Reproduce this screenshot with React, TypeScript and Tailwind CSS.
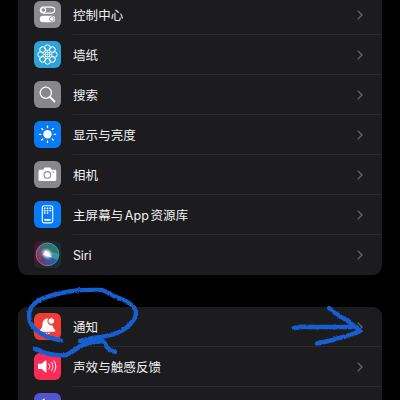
import type { ReactNode } from 'react'

type Item = { label: ReactNode; bg: string; icon: ReactNode }

const ControlIcon = () => (
  <svg viewBox="0 0 27 27" className="size-full" fill="none" stroke="white" strokeWidth="1.1">
    <rect x="6.3" y="6.1" width="14.4" height="6" rx="3" />
    <circle cx="9.3" cy="9.1" r="2.3" />
    <rect x="5.8" y="14.7" width="15.4" height="6.6" rx="3.3" fill="white" stroke="none" />
    <circle cx="17.9" cy="18" r="2.3" fill="white" stroke="#8b8b90" strokeWidth="0.9" />
  </svg>
)

const petals = [0, 45, 90, 135, 180, 225, 270, 315]

const WallpaperIcon = () => (
  <svg viewBox="0 0 27 27" className="size-full" fill="none" stroke="white" strokeWidth="0.95">
    {petals.map(a => (
      <g key={a} transform={`rotate(${a} 13.5 13.5)`}>
        <circle cx="13.5" cy="6.6" r="2.8" />
        <path d="M13.5 11.3V9.8" strokeWidth="0.8" />
      </g>
    ))}
    <circle cx="13.5" cy="13.5" r="2.5" />
    <circle cx="13.5" cy="13.5" r="1.1" fill="white" stroke="none" />
  </svg>
)

const SearchIcon = () => (
  <svg viewBox="0 0 27 27" className="size-full" fill="none" stroke="white" strokeLinecap="round">
    <circle cx="11.8" cy="11.8" r="5.6" strokeWidth="1.3" />
    <path d="M15.9 15.9l4.6 4.6" strokeWidth="1.8" />
  </svg>
)

const SunIcon = () => (
  <svg viewBox="0 0 27 27" className="size-full" stroke="white" strokeWidth="1.3" strokeLinecap="round">
    <circle cx="13.5" cy="13.3" r="4.2" fill="white" stroke="none" />
    {petals.map(a => (
      <path key={a} d="M13.5 6.6V5.2" transform={`rotate(${a} 13.5 13.3)`} />
    ))}
  </svg>
)

const CameraIcon = () => (
  <svg viewBox="0 0 27 27" className="size-full" fill="none">
    <path
      d="M6.2 8.7h3l1-1.7c.2-.4.5-.5.9-.5h4.6c.4 0 .7.1.9.5l1 1.7h3c1 0 1.7.7 1.7 1.7v8c0 1-.7 1.7-1.7 1.7H6.2c-1 0-1.7-.7-1.7-1.7v-8c0-1 .7-1.7 1.7-1.7z"
      fill="white"
    />
    <circle cx="13.4" cy="13.9" r="3.3" stroke="#88888c" strokeWidth="1.1" />
    <circle cx="19.2" cy="11.1" r="0.8" fill="#88888c" />
  </svg>
)

const PhoneIcon = () => (
  <svg viewBox="0 0 27 27" className="size-full" fill="none">
    <rect x="8.3" y="4.7" width="10.4" height="17.2" rx="1.9" stroke="white" strokeWidth="1.1" />
    {[7.2, 9.6, 12].map(y =>
      [10.7, 13.5, 16.3].map(x => (
        <rect key={`${x}-${y}`} x={x - 0.8} y={y - 0.75} width="1.6" height="1.6" rx="0.3" fill={y === 12 && x > 14 ? 'none' : 'white'} />
      )),
    )}
    <rect x="10.2" y="18" width="6.6" height="1.8" rx="0.7" fill="white" />
  </svg>
)

const SiriIcon = () => (
  <svg viewBox="0 0 27 27" className="size-full" fill="none">
    <defs>
      <linearGradient id="siriBg" x1="0" y1="0.2" x2="1" y2="0.6">
        <stop stopColor="#520f30" />
        <stop offset="0.4" stopColor="#2a2434" />
        <stop offset="1" stopColor="#0c3340" />
      </linearGradient>
      <linearGradient id="siriOrb" x1="0.1" y1="0.8" x2="0.8" y2="0.1">
        <stop stopColor="#96285f" />
        <stop offset="0.35" stopColor="#6d5070" />
        <stop offset="0.65" stopColor="#35736c" />
        <stop offset="1" stopColor="#237f70" />
      </linearGradient>
      <radialGradient id="siriGlow">
        <stop stopColor="#fff" />
        <stop offset="0.35" stopColor="#f1ecf3" />
        <stop offset="1" stopColor="#bcaed6" stopOpacity="0" />
      </radialGradient>
      <radialGradient id="siriBlue">
        <stop stopColor="#2f62b4" />
        <stop offset="0.4" stopColor="#2d5eac" />
        <stop offset="1" stopColor="#253b80" stopOpacity="0" />
      </radialGradient>
    </defs>
    <rect width="27" height="27" fill="url(#siriBg)" />
    <circle cx="13.5" cy="13.3" r="11.4" fill="url(#siriOrb)" />
    <ellipse cx="15.5" cy="18.5" rx="9" ry="5.8" fill="url(#siriBlue)" />
    <path d="M14 14c4-3.4 7.5-3.2 10.3-1 .1 2-.5 4-1.5 5.6-3.4-.4-6-2-8.8-4.6z" fill="#38b0cc" opacity="0.6" />
    <ellipse cx="13" cy="12.8" rx="6.8" ry="5.8" transform="rotate(35 13 12.8)" fill="url(#siriGlow)" />
    <path d="M11 9.5c2.5 1.2 5 3.8 7 7-3.2-1-6.8-1.7-9-2.8 1.2-1 1.8-2.4 2-4.2z" fill="#fff" opacity="0.8" />
    <circle cx="13.5" cy="13.3" r="11.4" stroke="#8ba6b3" strokeOpacity="0.75" strokeWidth="0.8" />
  </svg>
)

const BellIcon = () => (
  <svg viewBox="0 0 27 27" className="size-full" fill="white">
    <path d="M13.3 5.2c-3.2.4-4.7 2.8-4.8 5.6-.1 3.4-.8 4.5-2.4 6-.8.8-.5 2 .7 2h13.4c1.2 0 1.5-1.2.7-2-1.2-1.1-1.9-2.3-2.2-4.3-3.5.5-6.2-2.9-4.9-6.2z" />
    <circle cx="17.3" cy="8" r="2.8" />
    <path d="M11.2 19.7h4.6c-.3 1.2-1.1 1.9-2.3 1.9s-2-.7-2.3-1.9z" />
  </svg>
)

const SpeakerIcon = () => (
  <svg viewBox="0 0 27 27" className="size-full" fill="none" stroke="white" strokeWidth="1" strokeLinecap="round">
    <path d="M5 10.8h2.6L11.5 7.6c.4-.4 1-.2 1 .4v10.8c0 .6-.6.8-1 .4l-3.9-3.1H5c-.6 0-1-.4-1-1v-3.3c0-.6.4-1 1-1z" fill="white" stroke="none" />
    <path d="M15 10.9c1.1 1.6 1.1 3.6 0 5.1" />
    <path d="M17.4 9.3c2 2.6 2 5.7 0 8.3" />
    <path d="M19.8 7.8c2.7 3.6 2.7 7.8 0 11.3" />
  </svg>
)

const MoonIcon = () => (
  <svg viewBox="0 0 27 27" className="size-full" fill="white">
    <path d="M11 5.3c-2.2 5.9 2.5 11.6 9.7 10.6-1.5 3.2-4.2 5-7.4 5-8.8 0-11-12-2.3-15.6z" />
  </svg>
)

const general: Item[] = [
  { label: '控制中心', bg: 'bg-[#8b8b90]', icon: <ControlIcon /> },
  { label: '墙纸', bg: 'bg-[#2fa2d6]', icon: <WallpaperIcon /> },
  { label: '搜索', bg: 'bg-[#88888c]', icon: <SearchIcon /> },
  { label: '显示与亮度', bg: 'bg-[#087bf5]', icon: <SunIcon /> },
  { label: '相机', bg: 'bg-[#88888c]', icon: <CameraIcon /> },
  {
    label: <>主屏幕与<span className="mx-[1.5px]">App</span>资源库</>,
    bg: 'bg-[#087bf5]',
    icon: <PhoneIcon />,
  },
  { label: <span className="tracking-[-0.15px]">Siri</span>, bg: 'bg-[#252630]', icon: <SiriIcon /> },
]

const alerts: Item[] = [
  { label: '通知', bg: 'bg-[#ef3d36]', icon: <BellIcon /> },
  { label: '声效与触感反馈', bg: 'bg-[#fb2d58]', icon: <SpeakerIcon /> },
  { label: null, bg: 'bg-[#5654cc]', icon: <MoonIcon /> },
]

function Row({ item, last }: { item: Item; last: boolean }) {
  return (
    <div className="flex h-10 shrink-0 items-stretch pl-4">
      <div className="mt-1.5 size-[27px] shrink-0 overflow-hidden rounded-[6px]">
        <div className={`size-full ${item.bg}`}>{item.icon}</div>
      </div>
      <div className={`ml-3 flex flex-1 items-center justify-between border-b pt-px pr-[18px] ${last ? 'border-transparent' : 'border-[#2a2a2c]'}`}>
        <span className="whitespace-nowrap pt-px text-[12.5px] leading-5 tracking-[0.08px] text-[#f2f2f3]">{item.label}</span>
        <svg viewBox="0 0 8 10" className="h-[10px] w-2" fill="none" stroke="#626266" strokeWidth="1.3">
          <path d="M1.8 0.8L6 5 1.8 9.2" />
        </svg>
      </div>
    </div>
  )
}

function Group({ items, className }: { items: Item[]; className: string }) {
  return (
    <section className={`flex flex-col overflow-hidden bg-[#1c1c1e] ${className}`}>
      {items.map((item, i) => (
        <Row key={i} item={item} last={i === items.length - 1} />
      ))}
    </section>
  )
}

// Hand-drawn marker strokes laid over the list
function Marker() {
  return (
    <svg viewBox="0 0 400 400" className="pointer-events-none absolute inset-0 size-full" fill="none" stroke="#165fd2" strokeWidth="4.4" strokeLinecap="round" strokeLinejoin="round">
      <defs>
        <filter id="rough" x="0" y="0" width="400" height="400" filterUnits="userSpaceOnUse" colorInterpolationFilters="sRGB">
          <feTurbulence type="fractalNoise" baseFrequency="0.45" numOctaves="2" seed="4" />
          <feDisplacementMap in="SourceGraphic" scale="2.5" xChannelSelector="R" yChannelSelector="G" />
        </filter>
      </defs>
      <g filter="url(#rough)">
        <path d="M61 340.5C56 339 49 338 44 335C37 332 33 328 30 322C28 315 29 309 34 304C42 297 55 294 67 292C79 289 91 290 102 290C108 292 112 296 119 298C127 301 134 305 136 311C137 317 132 323 126 328C117 335 102 337 93 338L80 341" />
        <path d="M35 349C40 350 43 353 49 354C55 355 61 356 66 355C74 352 78 346 86 344C92 342 98 341 103 341C106 344 107 348 110 350L115 352" />
        <path d="M294 328C298 328 302 326 308 327C322 327 337 327 352 327" />
        <path d="M329 308C334 313 341 317 348 321C353 325 357 328 360 331C352 335 342 337 333 340L317 343.5" />
      </g>
    </svg>
  )
}

export default function App() {
  return (
    <main className="relative flex h-[400px] w-[400px] flex-col overflow-hidden bg-black px-[18px] font-['Inter','Noto_Sans_CJK_SC',sans-serif]">
      <Group items={general} className="-mt-[5px] shrink-0 rounded-b-[9px]" />
      <Group items={alerts} className="mt-8 shrink-0 rounded-t-[9px]" />
      <Marker />
    </main>
  )
}
